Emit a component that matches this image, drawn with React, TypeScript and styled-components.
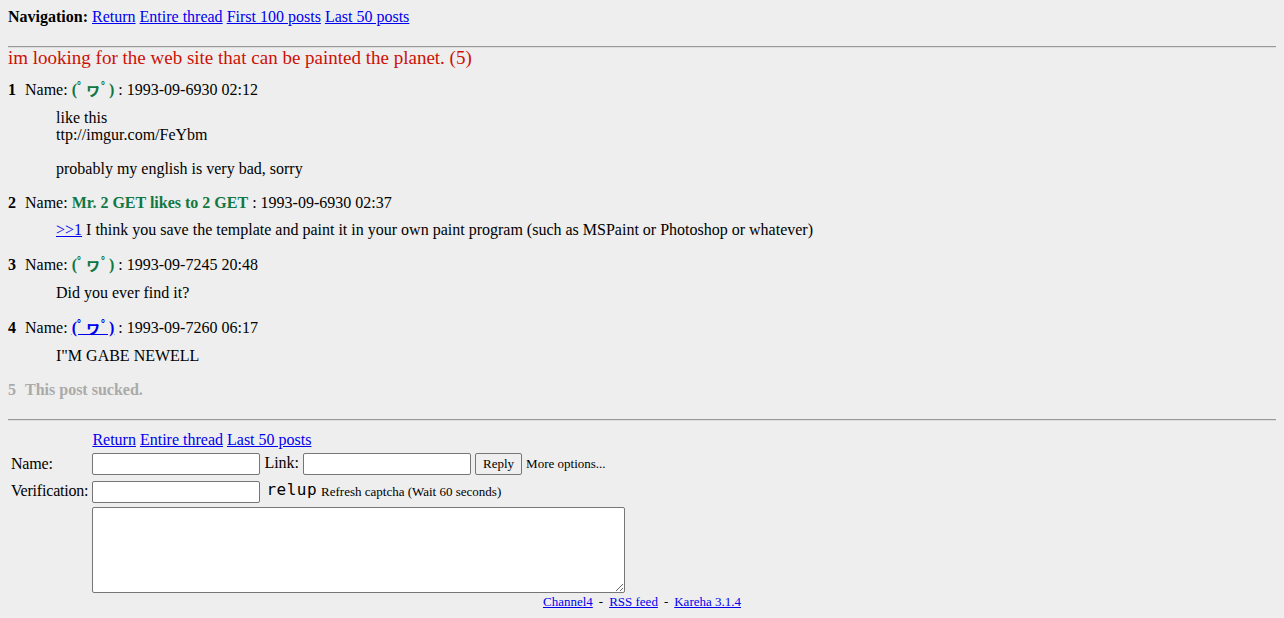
import React from "react";
import styled, { createGlobalStyle } from "styled-components";

const GlobalStyle = createGlobalStyle`
  body {
    margin: 8px;
    background: #eeeeee;
    color: #000;
    font-family: "Liberation Serif", "Times New Roman", "Noto Sans CJK JP", serif;
    font-size: 16px;
  }
  a { color: #0000ee; }
`;

interface Post {
  num: number;
  name?: string;
  face?: boolean;
  link?: boolean;
  date?: string;
  body?: React.ReactNode;
  deleted?: boolean;
}

const face = "(ﾟヮﾟ)";

const posts: Post[] = [
  {
    num: 1,
    name: face,
    face: true,
    date: "1993-09-6930 02:12",
    body: (
      <>
        <p>
          like this
          <br />
          ttp://imgur.com/FeYbm
        </p>
        <p>probably my english is very bad, sorry</p>
      </>
    ),
  },
  {
    num: 2,
    name: "Mr. 2 GET likes to 2 GET",
    date: "1993-09-6930 02:37",
    body: (
      <p>
        <a href="#">&gt;&gt;1</a> I think you save the template and paint it in
        your own paint program (such as MSPaint or Photoshop or whatever)
      </p>
    ),
  },
  {
    num: 3,
    name: face,
    face: true,
    date: "1993-09-7245 20:48",
    body: <p>Did you ever find it?</p>,
  },
  {
    num: 4,
    name: face,
    face: true,
    link: true,
    date: "1993-09-7260 06:17",
    body: <p>I"M GABE NEWELL</p>,
  },
  { num: 5, deleted: true },
];

const Nav = styled.div`
  line-height: 18px;
`;

const Rule = styled.hr<{ $top: number }>`
  margin: ${(p) => p.$top}px 0 0;
  border: 0;
  border-top: 1px solid #999;
  border-bottom: 1px solid #ddd;
  height: 0;
`;

const Title = styled.h2`
  margin: 0 0 12px;
  font-size: 19px;
  font-weight: normal;
  color: #cc1105;
  line-height: 20px;
`;

const Reply = styled.div`
  margin-bottom: 17px;
`;

const ReplyHead = styled.h3<{ $deleted?: boolean; $face?: boolean }>`
  margin: 0;
  font-size: 16px;
  font-weight: normal;
  line-height: ${(p) => (p.$face ? "20px" : "18px")};
  display: flex;
  gap: 9px;
  color: ${(p) => (p.$deleted ? "#aaaaaa" : "#000")};
`;

const Num = styled.b``;

const PostName = styled.b`
  color: #117743;
  a { color: #0000ee; }
`;

const Body = styled.div`
  margin: 9px 0 0 48px;
  p {
    margin: 0 0 17px;
    line-height: 17px;
  }
  p:last-child { margin-bottom: 0; }
`;

const FormTable = styled.table`
  margin-top: 7px;
  border-spacing: 2px;
  td {
    padding: 1px;
    vertical-align: middle;
  }
`;

const Label = styled.td`
  vertical-align: top;
  letter-spacing: -0.2px;
  white-space: nowrap;
`;

const Field = styled.input`
  width: 168px;
  height: 22px;
  box-sizing: border-box;
  border: 1px solid #767676;
  border-radius: 2px;
  background: #fff;
  font-size: 13px;
  vertical-align: middle;
`;

const Btn = styled.button`
  font-family: "Liberation Serif", serif;
  font-size: 13px;
  height: 22px;
  padding: 0 7px;
  margin-left: 4px;
  border: 1px solid #767676;
  border-radius: 2px;
  background: #efefef;
  vertical-align: middle;
`;

const Small = styled.small`
  font-size: 13px;
`;

const Captcha = styled.span`
  font-family: "DejaVu Sans Mono", monospace;
  font-size: 16px;
  line-height: 22px;
  letter-spacing: 0.5px;
  margin: 0 4px 0 6px;
  vertical-align: 1px;
`;

const Area = styled.textarea`
  width: 533px;
  height: 86px;
  box-sizing: border-box;
  border: 1px solid #767676;
  border-radius: 2px;
  background: #fff;
  display: block;
`;

const Footer = styled.div`
  text-align: center;
  font-size: 13px;
  margin-top: -2px;
`;

const Sep = styled.span`
  margin: 0 6px;
`;

export default function App() {
  return (
    <>
      <GlobalStyle />
      <Nav>
        <b>Navigation:</b> <a href="#">Return</a> <a href="#">Entire thread</a>{" "}
        <a href="#">First 100 posts</a> <a href="#">Last 50 posts</a>
      </Nav>
      <Rule $top={20} />
      <Title>im looking for the web site that can be painted the planet. (5)</Title>
      {posts.map((p) => (
        <Reply key={p.num}>
          {p.deleted ? (
            <ReplyHead $deleted>
              <Num>{p.num}</Num>
              <b>This post sucked.</b>
            </ReplyHead>
          ) : (
            <>
              <ReplyHead $face={p.face}>
                <Num>{p.num}</Num>
                <span>
                  Name:{" "}
                  <PostName>{p.link ? <a href="#">{p.name}</a> : p.name}</PostName>{" "}
                  : {p.date}
                </span>
              </ReplyHead>
              <Body>{p.body}</Body>
            </>
          )}
        </Reply>
      ))}
      <Rule $top={20} />
      <FormTable>
        <tbody>
          <tr>
            <td></td>
            <td>
              <a href="#">Return</a> <a href="#">Entire thread</a>{" "}
              <a href="#">Last 50 posts</a>
            </td>
          </tr>
          <tr>
            <Label>Name:</Label>
            <td>
              <Field /> Link: <Field />
              <Btn>Reply</Btn> <Small>More options...</Small>
            </td>
          </tr>
          <tr>
            <Label>Verification:</Label>
            <td>
              <Field />
              <Captcha>relup</Captcha>
              <Small>Refresh captcha (Wait 60 seconds)</Small>
            </td>
          </tr>
          <tr>
            <td></td>
            <td>
              <Area />
            </td>
          </tr>
        </tbody>
      </FormTable>
      <Footer>
        <a href="#">Channel4</a>
        <Sep>-</Sep>
        <a href="#">RSS feed</a>
        <Sep>-</Sep>
        <a href="#">Kareha 3.1.4</a>
      </Footer>
    </>
  );
}
